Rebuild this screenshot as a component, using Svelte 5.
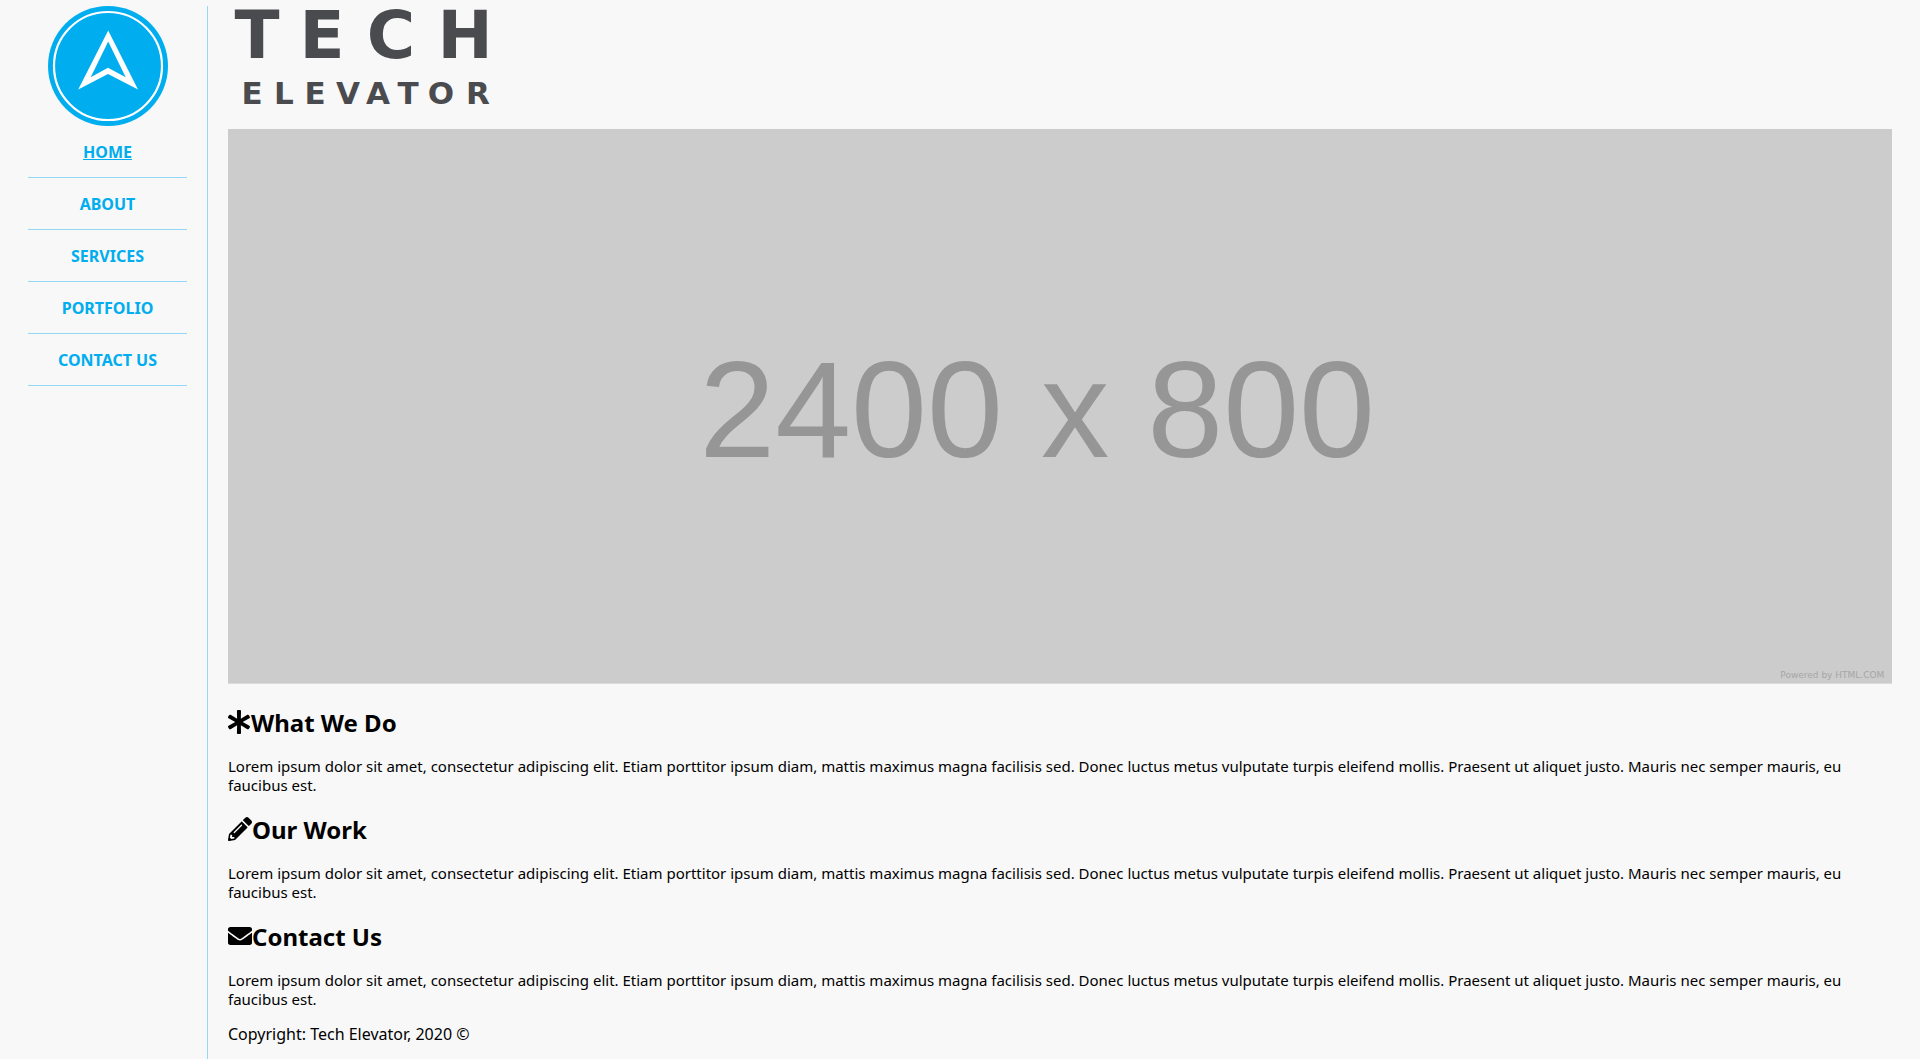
<script>
  const links = ['Home', 'About', 'Services', 'Portfolio', 'Contact Us'];
  const current = 'Home';
  const lorem =
    'Lorem ipsum dolor sit amet, consectetur adipiscing elit. Etiam porttitor ipsum diam, mattis maximus magna facilisis sed. Donec luctus metus vulputate turpis eleifend mollis. Praesent ut aliquet justo. Mauris nec semper mauris, eu faucibus est.';
  const sections = [
    {
      title: 'What We Do',
      box: '22 0 490 512',
      icon: 'M478.21 334.093L336 256l142.21-78.093c11.795-6.477 15.961-21.384 9.232-33.037l-19.48-33.741c-6.728-11.653-21.72-15.499-33.227-8.523L296 186.718l3.475-162.204C299.763 11.061 288.937 0 275.48 0h-38.96c-13.456 0-24.283 11.061-23.994 24.514L216 186.718 77.265 102.607c-11.506-6.976-26.499-3.13-33.227 8.523l-19.48 33.741c-6.728 11.653-2.562 26.56 9.233 33.037L176 256 33.79 334.093c-11.795 6.477-15.961 21.384-9.232 33.037l19.48 33.741c6.728 11.653 21.721 15.499 33.227 8.523L216 325.282l-3.475 162.204C212.237 500.939 223.064 512 236.52 512h38.961c13.456 0 24.283-11.061 23.995-24.514L296 325.282l138.735 84.111c11.506 6.976 26.499 3.13 33.227-8.523l19.48-33.741c6.728-11.653 2.563-26.559-9.232-33.036z'
    },
    {
      title: 'Our Work',
      box: '0 0 512 512',
      icon: 'M497.9 142.1l-46.1 46.1c-4.7 4.7-12.3 4.7-17 0l-111-111c-4.7-4.7-4.7-12.3 0-17l46.1-46.1c18.7-18.7 49.1-18.7 67.9 0l60.1 60.1c18.8 18.7 18.8 49.1 0 67.9zM284.2 99.8L21.6 362.4.4 483.9c-2.9 16.4 11.4 30.6 27.8 27.8l121.5-21.3 262.6-262.6c4.7-4.7 4.7-12.3 0-17l-111-111c-4.8-4.7-12.4-4.7-17.1 0zM124.1 339.9c-5.5-5.5-5.5-14.3 0-19.8l154-154c5.5-5.5 14.3-5.5 19.8 0s5.5 14.3 0 19.8l-154 154c-5.5 5.5-14.3 5.5-19.8 0zM88 424h48v36.3l-64.5 11.3-31.1-31.1L51.7 376H88v48z'
    },
    {
      title: 'Contact Us',
      box: '0 0 512 512',
      icon: 'M502.3 190.8c3.9-3.1 9.7-.2 9.7 4.7V400c0 26.5-21.5 48-48 48H48c-26.5 0-48-21.5-48-48V195.6c0-5 5.7-7.8 9.7-4.7 22.4 17.4 52.1 39.5 154.1 113.6 21.1 15.4 56.7 47.8 92.2 47.6 35.7.3 72-32.8 92.3-47.6 102-74.1 131.6-96.3 154-113.7zM256 320c23.2.4 56.6-29.2 73.4-41.4 132.7-96.3 142.8-104.7 173.4-128.7 5.8-4.5 9.2-11.5 9.2-18.9v-19c0-26.5-21.5-48-48-48H48c-26.5 0-48 21.5-48 48v19c0 7.4 3.4 14.3 9.2 18.9 30.6 23.9 40.7 32.4 173.4 128.7 16.8 12.2 50.2 41.8 73.4 41.4z'
    }
  ];
</script>

<div class="page">
  <aside class="sidebar">
    <svg class="badge" viewBox="0 0 120 120" role="img" aria-label="Tech Elevator emblem">
      <circle cx="60" cy="60" r="60" fill="#00aeef" />
      <circle cx="60" cy="60" r="54" fill="none" stroke="#fff" stroke-width="2.2" />
      <path
        fill="#fff"
        fill-rule="evenodd"
        d="M60.2 24.5L90 83.5L60 68L30.2 83.5ZM60.2 35.5L42.7 71.2L60 61.7L77.7 71.2Z"
      />
    </svg>
    <nav>
      <ul>
        {#each links as link}
          <li>
            <a href="#{link}" class:current={link === current}>{link}</a>
          </li>
        {/each}
      </ul>
    </nav>
  </aside>

  <main>
    <header>
      <svg class="wordmark" viewBox="0 0 268 103" role="img" aria-label="Tech Elevator">
        <text class="big" x="29 94 163 237" y="52">TECH</text>
        <text class="small" x="24 56 87 120 150 180 213 250" y="98">ELEVATOR</text>
      </svg>
    </header>

    <svg class="banner" viewBox="0 0 2400 800" role="img" aria-label="2400 x 800">
      <rect width="2400" height="800" fill="#ccc" />
      <text class="size" x="1167" y="473">2400 x 800</text>
      <text class="credit" x="2389" y="792">Powered by HTML.COM</text>
    </svg>

    {#each sections as section}
      <section>
        <h2>
          <svg viewBox={section.box} aria-hidden="true"><path d={section.icon} /></svg>{section.title}
        </h2>
        <p>{lorem}</p>
      </section>
    {/each}

    <footer>Copyright: Tech Elevator, 2020 ©</footer>
  </main>
</div>

<style>
  :global(body) {
    background: #f8f8f8;
  }

  .page {
    box-sizing: border-box;
    display: flex;
    min-height: 100vh;
    padding: 6px 28px 0;
    color: #000;
    font-family: Tahoma, 'Noto Sans', sans-serif;
    font-size: 16px;
    line-height: 19px;
  }

  .sidebar {
    flex: none;
    width: 159px;
    padding-right: 20px;
    border-right: 1px solid #93d9f5;
  }

  .badge {
    display: block;
    width: 120px;
    margin: 0 auto;
  }

  ul {
    margin: 0;
    padding: 0;
    list-style: none;
    text-align: center;
  }

  li {
    padding: 17px 0 15px;
    border-bottom: 1px solid #93d9f5;
  }

  a {
    color: #00adee;
    font-weight: bold;
    text-decoration: none;
    text-transform: uppercase;
  }

  a.current {
    text-decoration: underline;
  }

  main {
    flex: 1;
    min-width: 0;
    padding-left: 20px;
  }

  .wordmark {
    display: block;
    width: 268px;
    margin-bottom: 20px;
    overflow: visible;
  }

  .wordmark text {
    fill: #4a4b4e;
    font-family: 'DejaVu Sans', sans-serif;
    font-weight: bold;
    text-anchor: middle;
  }

  .wordmark .big {
    font-size: 66px;
  }

  .wordmark .small {
    font-size: 31px;
  }

  .banner {
    display: block;
    width: 100%;
    margin-bottom: 24px;
  }

  .size {
    fill: #969696;
    font-family: 'Liberation Sans Narrow', 'Liberation Sans', sans-serif;
    font-size: 197px;
    text-anchor: middle;
  }

  .credit {
    fill: #a6a6a6;
    font-family: 'DejaVu Sans', sans-serif;
    font-size: 13px;
    text-anchor: end;
  }

  h2 {
    display: flex;
    align-items: center;
    margin: 0 0 20px;
    font-size: 24px;
    line-height: 29px;
  }

  h2 svg {
    height: 24px;
  }

  p {
    margin: 0 0 20px;
    font-size: 15px;
  }

  footer {
    margin-top: -4px;
    padding-bottom: 15px;
  }
</style>
